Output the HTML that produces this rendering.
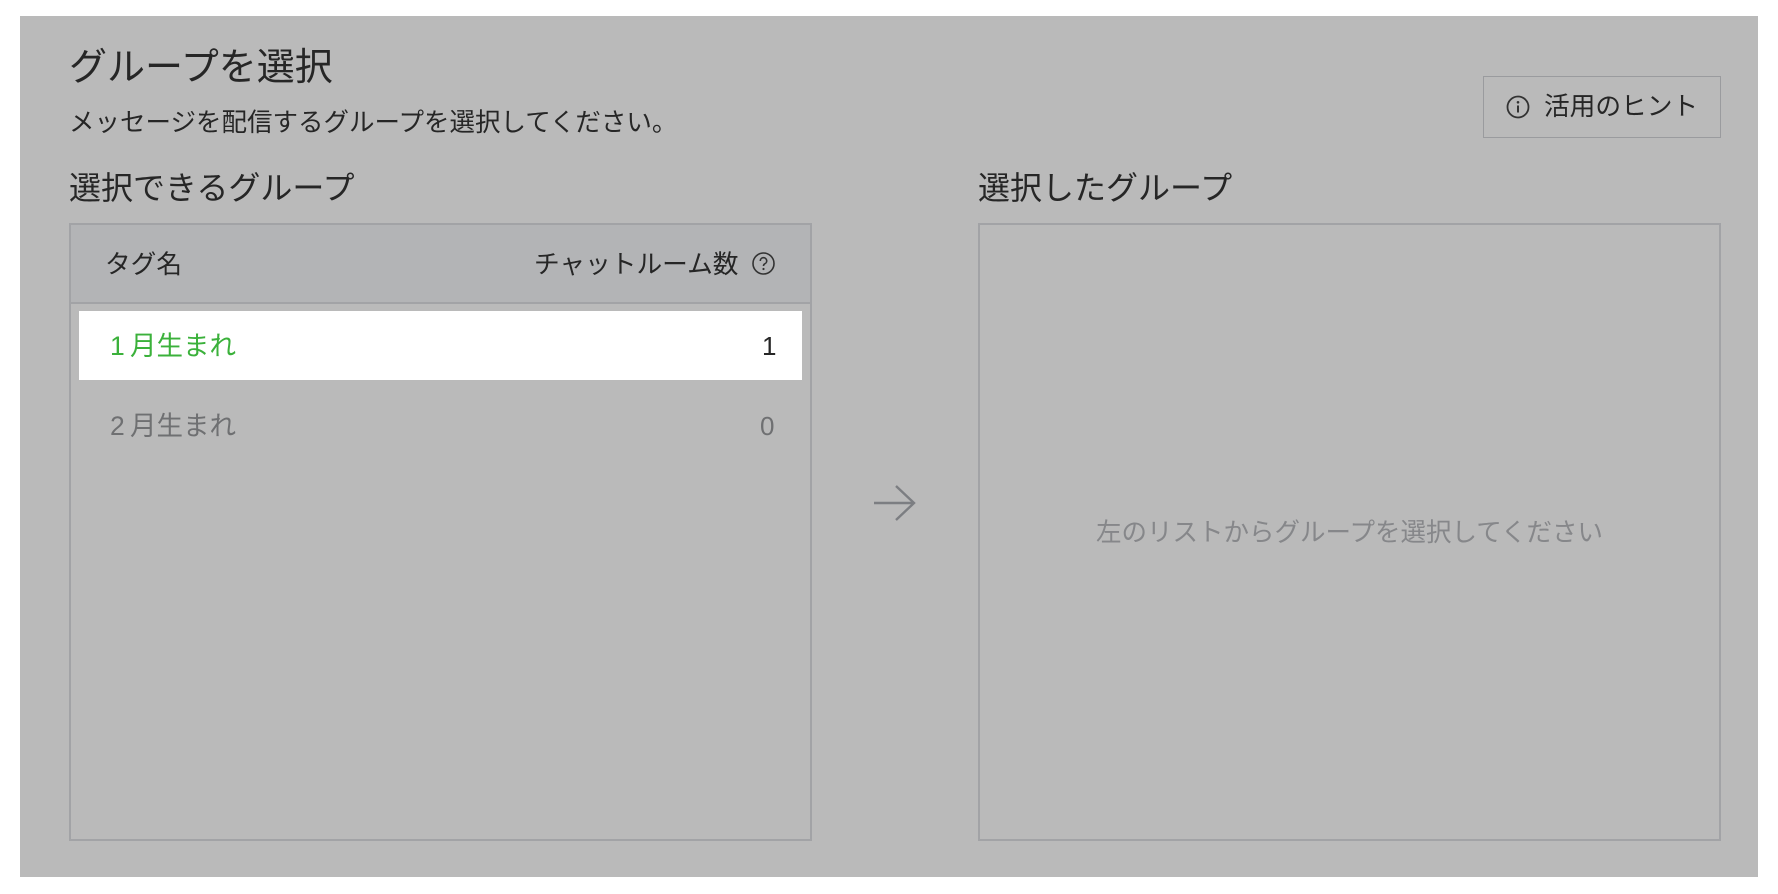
<!DOCTYPE html>
<html><head><meta charset="utf-8"><style>
*{margin:0;padding:0;box-sizing:border-box}
body{width:1778px;height:894px;background:#fff;position:relative;font-family:"Liberation Sans","Noto Sans CJK JP",sans-serif;color:#262626;overflow:hidden}
.p{position:absolute;left:20px;top:16px;width:1738px;height:861px;background:#bababa}
.a{position:absolute;white-space:nowrap;line-height:1}
.box{position:absolute;border:2px solid #a2a3a6}
</style></head><body>
<div class="p"></div>
<div class="a" style="left:69px;top:49px;font-size:38px">グループを選択</div>
<div class="a" style="left:69px;top:111px;font-size:25.5px">メッセージを配信するグループを選択してください。</div>
<div class="a" style="left:69px;top:172px;font-size:32px">選択できるグループ</div>
<div class="a" style="left:978px;top:172px;font-size:32px">選択したグループ</div>
<div class="box" style="left:1483px;top:76px;width:238px;height:62px;border-width:1.5px;border-color:#9a9b9e"></div>
<svg class="a" style="left:1505px;top:94px" width="26" height="26" viewBox="0 0 26 26"><circle cx="13" cy="13" r="10.5" fill="none" stroke="#333" stroke-width="1.8"/><circle cx="13" cy="8.3" r="1.3" fill="#333"/><path d="M13 11.5v7" stroke="#333" stroke-width="2"/></svg>
<div class="a" style="left:1544px;top:95px;font-size:25.7px">活用のヒント</div>
<div class="box" style="left:69px;top:223px;width:743px;height:618px"></div>
<div style="position:absolute;left:71px;top:225px;width:739px;height:79px;background:#b3b4b6;border-bottom:2px solid #a2a3a6"></div>
<div class="a" style="left:105px;top:253px;font-size:25.7px">タグ名</div>
<div class="a" style="left:534px;top:253px;font-size:25.7px">チャットルーム数</div>
<svg class="a" style="left:751px;top:251px" width="25" height="25" viewBox="0 0 25 25"><circle cx="12.5" cy="12.5" r="10.5" fill="none" stroke="#333" stroke-width="1.6"/><path d="M9.3 10a3.2 3.2 0 1 1 4.5 2.8c-1 .5-1.3 1.1-1.3 2.2" fill="none" stroke="#333" stroke-width="1.6"/><circle cx="12.5" cy="18" r="1.1" fill="#333"/></svg>
<div style="position:absolute;left:79px;top:311px;width:723px;height:69px;background:#fff"></div>
<div class="a" style="left:110px;top:333px;font-size:26.5px;color:#3bb13b">1&thinsp;月生まれ</div>
<div class="a" style="left:762px;top:333px;font-size:26px">1</div>
<div class="a" style="left:110px;top:413px;font-size:26.5px;color:#6f7072">2&thinsp;月生まれ</div>
<div class="a" style="left:760px;top:413px;font-size:26px;color:#6f7072">0</div>
<svg class="a" style="left:872px;top:483px" width="46" height="40" viewBox="0 0 46 40"><path d="M2 20h40M24 3l18 17-18 17" fill="none" stroke="#7c7e82" stroke-width="2.4"/></svg>
<div class="box" style="left:978px;top:223px;width:743px;height:618px"></div>
<div class="a" style="left:1096px;top:521px;font-size:25.5px;color:#86878a">左のリストからグループを選択してください</div>
</body></html>
